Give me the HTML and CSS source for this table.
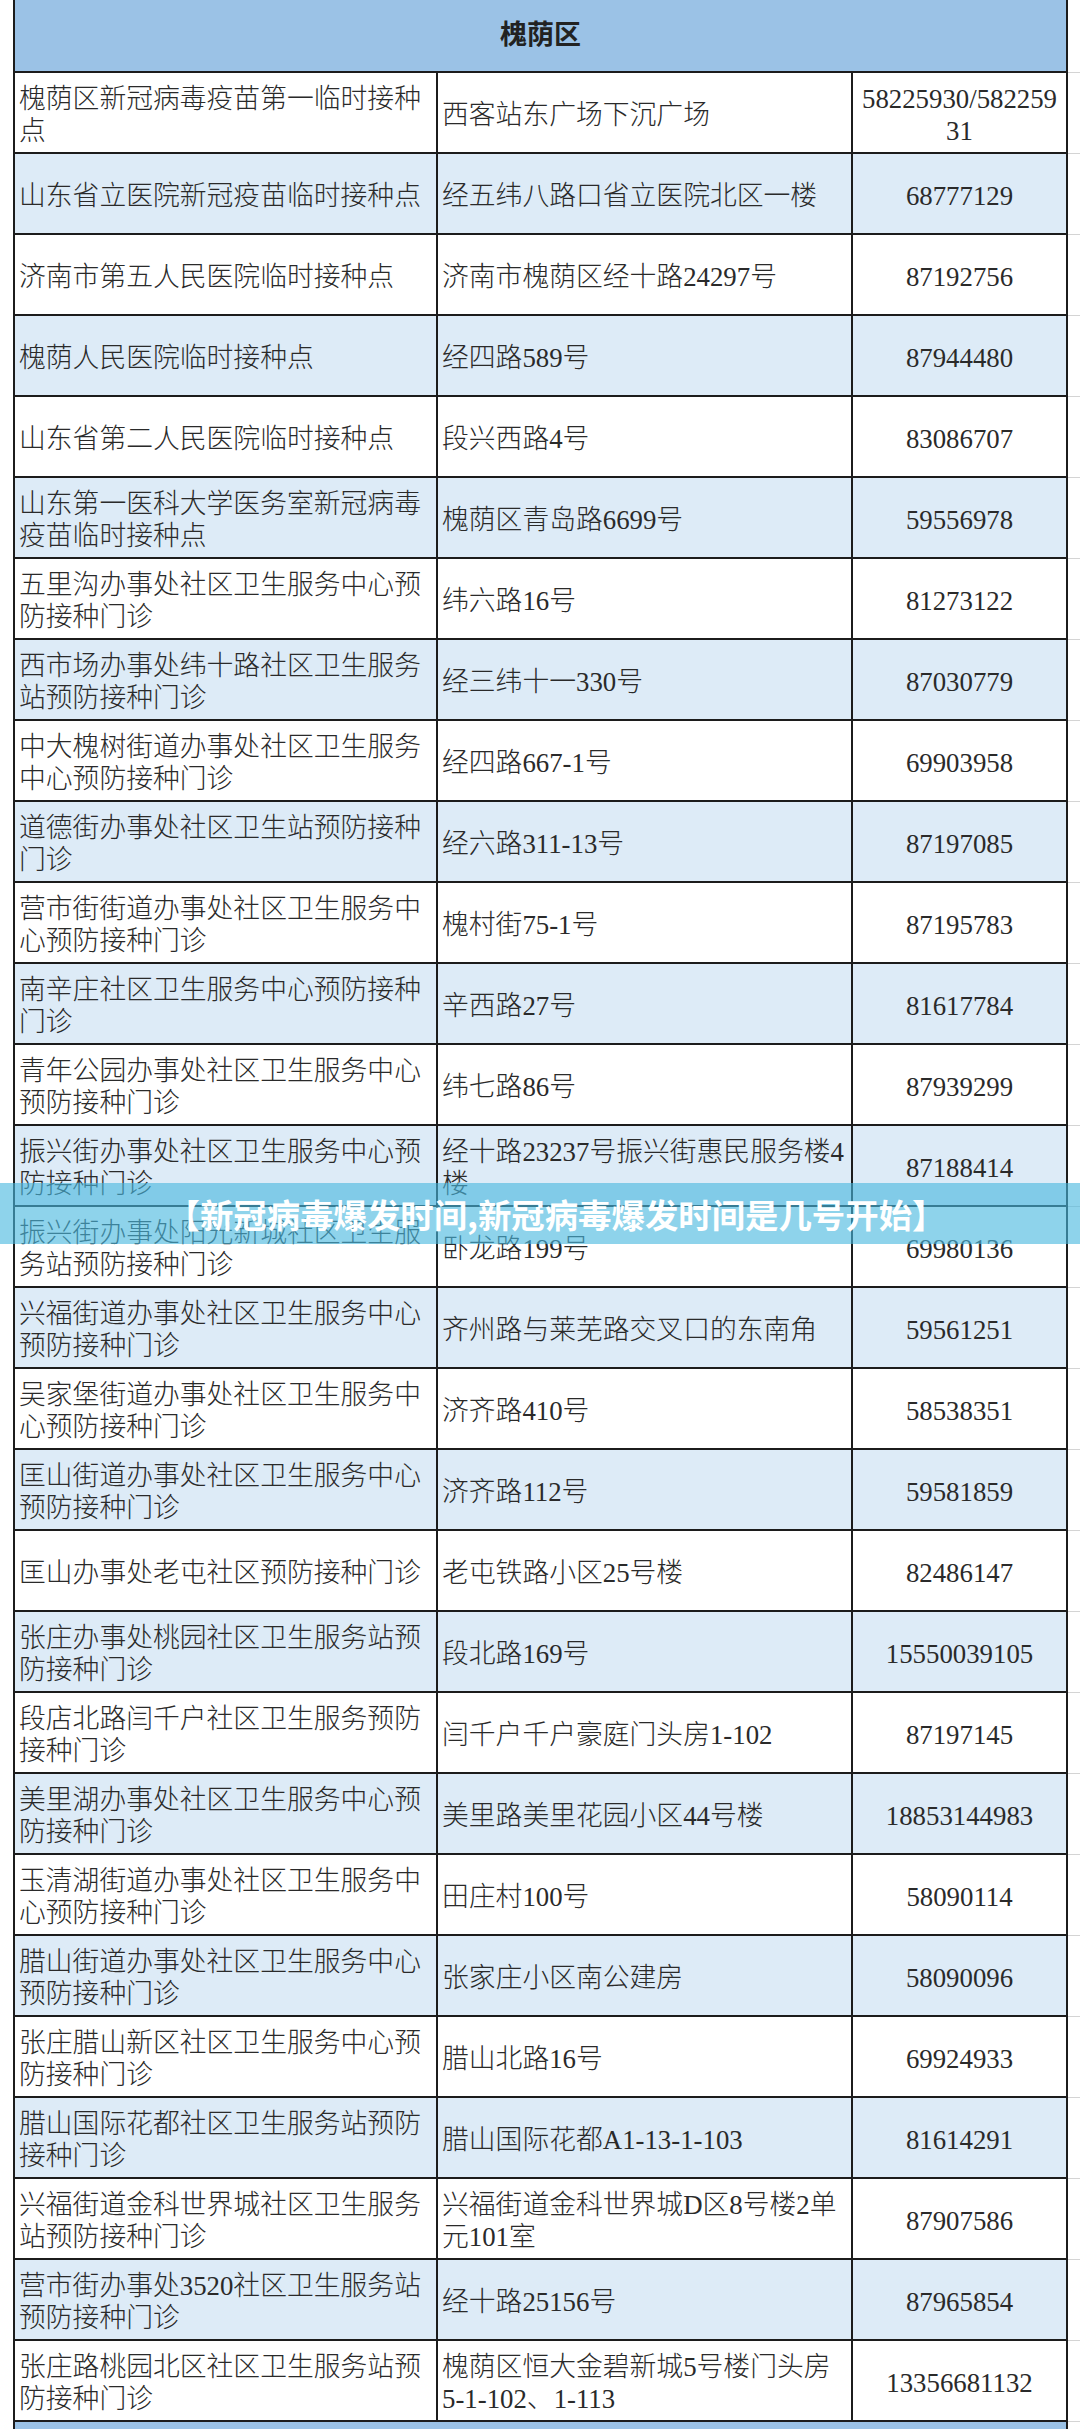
FILE: index.html
```html
<!DOCTYPE html>
<html lang="zh-CN">
<head>
<meta charset="utf-8">
<title>槐荫区接种点</title>
<link rel="stylesheet" href="styles.css">
</head>
<body>
<div class="page">
<table class="sheet">
<colgroup><col class="c1"><col class="c2"><col class="c3"><col class="c4"></colgroup>
<thead>
<tr class="head"><th colspan="3">槐荫区</th><td class="gap"></td></tr>
</thead>
<tbody>
<tr><td>槐荫区新冠病毒疫苗第一临时接种点</td><td>西客站东广场下沉广场</td><td class="tel">58225930/58225931</td><td class="gap"></td></tr>
<tr><td>山东省立医院新冠疫苗临时接种点</td><td>经五纬八路口省立医院北区一楼</td><td class="tel">68777129</td><td class="gap"></td></tr>
<tr><td>济南市第五人民医院临时接种点</td><td>济南市槐荫区经十路24297号</td><td class="tel">87192756</td><td class="gap"></td></tr>
<tr><td>槐荫人民医院临时接种点</td><td>经四路589号</td><td class="tel">87944480</td><td class="gap"></td></tr>
<tr><td>山东省第二人民医院临时接种点</td><td>段兴西路4号</td><td class="tel">83086707</td><td class="gap"></td></tr>
<tr><td>山东第一医科大学医务室新冠病毒疫苗临时接种点</td><td>槐荫区青岛路6699号</td><td class="tel">59556978</td><td class="gap"></td></tr>
<tr><td>五里沟办事处社区卫生服务中心预防接种门诊</td><td>纬六路16号</td><td class="tel">81273122</td><td class="gap"></td></tr>
<tr><td>西市场办事处纬十路社区卫生服务站预防接种门诊</td><td>经三纬十一330号</td><td class="tel">87030779</td><td class="gap"></td></tr>
<tr><td>中大槐树街道办事处社区卫生服务中心预防接种门诊</td><td>经四路667-1号</td><td class="tel">69903958</td><td class="gap"></td></tr>
<tr><td>道德街办事处社区卫生站预防接种门诊</td><td>经六路311-13号</td><td class="tel">87197085</td><td class="gap"></td></tr>
<tr><td>营市街街道办事处社区卫生服务中心预防接种门诊</td><td>槐村街75-1号</td><td class="tel">87195783</td><td class="gap"></td></tr>
<tr><td>南辛庄社区卫生服务中心预防接种门诊</td><td>辛西路27号</td><td class="tel">81617784</td><td class="gap"></td></tr>
<tr><td>青年公园办事处社区卫生服务中心预防接种门诊</td><td>纬七路86号</td><td class="tel">87939299</td><td class="gap"></td></tr>
<tr><td>振兴街办事处社区卫生服务中心预防接种门诊</td><td>经十路23237号振兴街惠民服务楼4楼</td><td class="tel">87188414</td><td class="gap"></td></tr>
<tr><td>振兴街办事处阳光新城社区卫生服务站预防接种门诊</td><td>卧龙路199号</td><td class="tel">69980136</td><td class="gap"></td></tr>
<tr><td>兴福街道办事处社区卫生服务中心预防接种门诊</td><td>齐州路与莱芜路交叉口的东南角</td><td class="tel">59561251</td><td class="gap"></td></tr>
<tr><td>吴家堡街道办事处社区卫生服务中心预防接种门诊</td><td>济齐路410号</td><td class="tel">58538351</td><td class="gap"></td></tr>
<tr><td>匡山街道办事处社区卫生服务中心预防接种门诊</td><td>济齐路112号</td><td class="tel">59581859</td><td class="gap"></td></tr>
<tr><td>匡山办事处老屯社区预防接种门诊</td><td>老屯铁路小区25号楼</td><td class="tel">82486147</td><td class="gap"></td></tr>
<tr><td>张庄办事处桃园社区卫生服务站预防接种门诊</td><td>段北路169号</td><td class="tel">15550039105</td><td class="gap"></td></tr>
<tr><td>段店北路闫千户社区卫生服务预防接种门诊</td><td>闫千户千户豪庭门头房1-102</td><td class="tel">87197145</td><td class="gap"></td></tr>
<tr><td>美里湖办事处社区卫生服务中心预防接种门诊</td><td>美里路美里花园小区44号楼</td><td class="tel">18853144983</td><td class="gap"></td></tr>
<tr><td>玉清湖街道办事处社区卫生服务中心预防接种门诊</td><td>田庄村100号</td><td class="tel">58090114</td><td class="gap"></td></tr>
<tr><td>腊山街道办事处社区卫生服务中心预防接种门诊</td><td>张家庄小区南公建房</td><td class="tel">58090096</td><td class="gap"></td></tr>
<tr><td>张庄腊山新区社区卫生服务中心预防接种门诊</td><td>腊山北路16号</td><td class="tel">69924933</td><td class="gap"></td></tr>
<tr><td>腊山国际花都社区卫生服务站预防接种门诊</td><td>腊山国际花都A1-13-1-103</td><td class="tel">81614291</td><td class="gap"></td></tr>
<tr><td>兴福街道金科世界城社区卫生服务站预防接种门诊</td><td>兴福街道金科世界城D区8号楼2单元101室</td><td class="tel">87907586</td><td class="gap"></td></tr>
<tr><td>营市街办事处3520社区卫生服务站预防接种门诊</td><td>经十路25156号</td><td class="tel">87965854</td><td class="gap"></td></tr>
<tr><td>张庄路桃园北区社区卫生服务站预防接种门诊</td><td>槐荫区恒大金碧新城5号楼门头房5-1-102、1-113</td><td class="tel">13356681132</td><td class="gap"></td></tr>
<tr class="head next"><th colspan="3"></th><td class="gap"></td></tr>
</tbody>
</table>
<div class="banner"><span class="banner-text">【新冠病毒爆发时间,新冠病毒爆发时间是几号开始】</span></div>
</div>
</body>
</html>
```

FILE: styles.css
```css
html, body {
  margin: 0;
  padding: 0;
  background: #ffffff;
}

.page {
  position: relative;
  width: 1080px;
  overflow: hidden;
}

.sheet {
  margin-left: 13px;
  width: 1067px;
  table-layout: fixed;
  border-collapse: collapse;
  font-family: "Liberation Serif", "Noto Sans CJK SC", serif;
  font-size: 26.8px;
  font-weight: 300;
  color: #2a2a2a;
}

.c1 { width: 423px; }
.c2 { width: 415px; }
.c3 { width: 215px; }
.c4 { width: 14px; }

.sheet td,
.sheet th {
  border: 2px solid #1c1c1c;
  padding: 5px 4px 0 4px;
  line-height: 32px;
  vertical-align: middle;
  text-align: left;
}

.sheet tbody tr {
  height: 81px;
}

.sheet tbody tr:nth-child(even) td:not(.gap) {
  background: #ddebf7;
}

.sheet .tel {
  text-align: center;
  word-break: break-all;
}

.sheet .head {
  height: 72px;
}

.sheet .head th {
  background: #9bc2e6;
  border-top: none;
  text-align: center;
  font-family: "Noto Sans CJK SC", sans-serif;
  font-weight: 700;
  font-size: 27px;
  padding: 0 0 6px 0;
  color: #222222;
}

.sheet .next th {
  border-bottom: none;
}

.sheet td.gap {
  border-left: none;
  border-right: none;
  border-top: 1px solid #d4d4d4;
  border-bottom: 1px solid #d4d4d4;
  background: #ffffff;
  padding: 0;
}

.sheet .head td.gap {
  border-top: none;
}

.banner {
  position: absolute;
  left: 0;
  right: 0;
  top: 1183px;
  height: 61px;
  background: rgba(72, 184, 222, 0.62);
  display: flex;
  align-items: center;
  justify-content: center;
  padding-left: 32px;
}

.banner-text {
  font-family: "Noto Sans CJK SC", sans-serif;
  font-weight: 700;
  font-size: 33.4px;
  color: #ffffff;
  line-height: 1;
}
```
